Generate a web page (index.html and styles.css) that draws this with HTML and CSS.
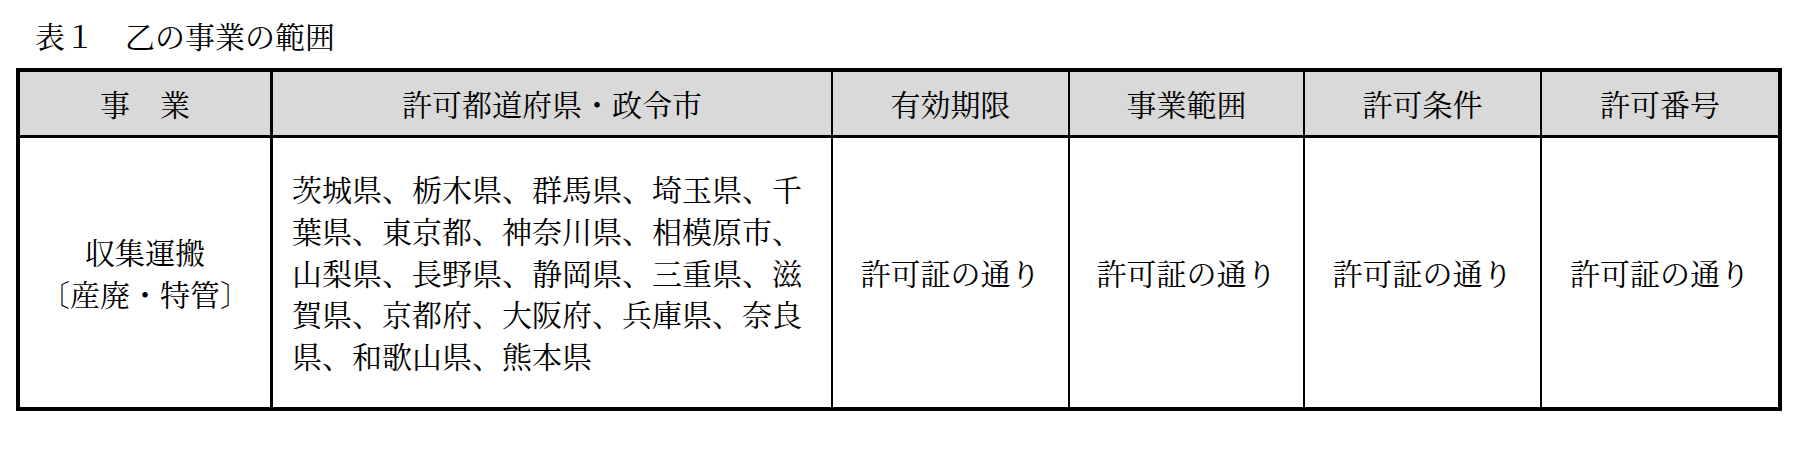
FILE: index.html
```html
<!DOCTYPE html>
<html lang="ja">
<head>
<meta charset="utf-8">
<title>表１　乙の事業の範囲</title>
<link rel="stylesheet" href="styles.css">
</head>
<body>
<div class="page">
  <div class="caption">表１　乙の事業の範囲</div>
  <div class="grid">
    <div class="cell head c1">事　業</div>
    <div class="cell head">許可都道府県・政令市</div>
    <div class="cell head">有効期限</div>
    <div class="cell head">事業範囲</div>
    <div class="cell head">許可条件</div>
    <div class="cell head last">許可番号</div>

    <div class="cell body c1 center">収集運搬<br>〔産廃・特管〕</div>
    <div class="cell body list">茨城県、栃木県、群馬県、埼玉県、千<br>葉県、東京都、神奈川県、相模原市、<br>山梨県、長野県、静岡県、三重県、滋<br>賀県、京都府、大阪府、兵庫県、奈良<br>県、和歌山県、熊本県</div>
    <div class="cell body center">許可証の通り</div>
    <div class="cell body center">許可証の通り</div>
    <div class="cell body center">許可証の通り</div>
    <div class="cell body center last">許可証の通り</div>
  </div>
</div>
</body>
</html>
```
FILE: styles.css
```css
* {
  box-sizing: border-box;
}

html, body {
  margin: 0;
  padding: 0;
  background: #ffffff;
}

body {
  font-family: "Noto Serif CJK JP", "Noto Sans CJK JP", serif;
  font-size: 30px;
  color: #000000;
  width: 1800px;
  height: 449px;
  overflow: hidden;
}

.page {
  padding-top: 15px;
}

.caption {
  line-height: 40px;
  height: 40px;
  margin-left: 35px;
  margin-bottom: 13px;
  white-space: nowrap;
}

.grid {
  margin-left: 16px;
  width: 1766px;
  border: 4px solid #000000;
  display: grid;
  grid-template-columns: 253px 560px 237px 235px 237px 236px;
  grid-template-rows: 66px 269px;
}

.cell {
  border-right: 2px solid #000000;
  display: flex;
  align-items: center;
  justify-content: center;
  text-align: center;
  white-space: nowrap;
}

.cell.c1 {
  border-right-width: 3px;
}

.cell.last {
  border-right: none;
}

.head {
  background: #d9d9d9;
  border-bottom: 3px solid #000000;
  line-height: 63px;
}

.body {
  line-height: 41.7px;
}

.list {
  justify-content: flex-start;
  text-align: left;
  padding-left: 19px;
}
```
